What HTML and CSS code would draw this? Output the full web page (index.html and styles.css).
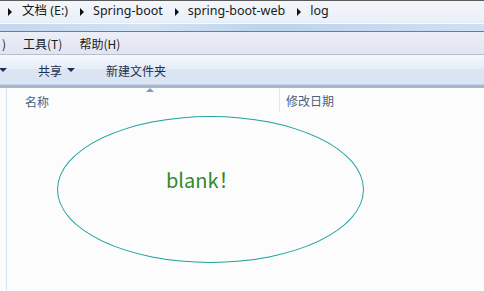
FILE: index.html
```html
<!DOCTYPE html>
<html>
<head>
<meta charset="utf-8">
<link rel="stylesheet" href="styles.css">
</head>
<body>
<div class="window">
  <div class="address">
    <span class="crumb-arrow first"></span><span class="crumb">文档 (E:)</span>
    <span class="crumb-arrow"></span><span class="crumb">Spring-boot</span>
    <span class="crumb-arrow"></span><span class="crumb">spring-boot-web</span>
    <span class="crumb-arrow"></span><span class="crumb">log</span>
  </div>
  <div class="band"></div>
  <div class="menubar">
    <span class="menu cut">)</span>
    <span class="menu">工具(T)</span>
    <span class="menu">帮助(H)</span>
  </div>
  <div class="toolbar">
    <span class="tool cutoff"><span class="caret"></span></span>
    <span class="tool">共享<span class="caret"></span></span>
    <span class="tool">新建文件夹</span>
  </div>
  <div class="content">
    <div class="headers">
      <div class="col col-name">名称<span class="sort"></span></div>
      <div class="col col-date">修改日期</div>
    </div>
    <div class="canvas">
      <div class="ellipse"><span class="blank">blank！</span></div>
    </div>
  </div>
</div>
</body>
</html>
```

FILE: styles.css
```css
* { box-sizing: border-box; }
html, body { margin: 0; padding: 0; }
body {
  width: 484px;
  height: 291px;
  overflow: hidden;
  font-family: "Noto Sans CJK SC", "Microsoft YaHei", sans-serif;
  background: #fcfcfc;
}
.window {
  display: flex;
  flex-direction: column;
  height: 291px;
}
.address {
  height: 22px;
  border-top: 1px solid #5a5a5a;
  background: linear-gradient(#f3f6fb, #eaf0f8);
  display: flex;
  align-items: center;
  font-family: "Noto Sans", "Noto Sans CJK SC", sans-serif;
  font-size: 12.5px;
  color: #1a1a1a;
  line-height: 1;
  white-space: nowrap;
}
.crumb-arrow {
  width: 0;
  height: 0;
  border-top: 4px solid transparent;
  border-bottom: 4px solid transparent;
  border-left: 4px solid #111;
  margin-left: 12px;
  margin-right: 9px;
}
.crumb-arrow.first { margin-left: 8px; margin-right: 10px; }
.band {
  height: 10px;
  border-top: 1px solid #e6ecf3;
  border-bottom: 1px solid #6d7c8e;
  background: linear-gradient(90deg, #c3d7ee 0%, #d3e3f4 30%, #bcd3ee 55%, #cfe0f3 100%);
  box-shadow: inset 0 1px 0 #f8fbff;
}
.menubar {
  height: 23px;
  background: linear-gradient(#eceef7, #e1e5f2);
  border-bottom: 1px solid #b9bfd0;
  display: flex;
  align-items: center;
  font-size: 12px;
  color: #1a1a1a;
}
.menu { margin-right: 17px; white-space: nowrap; }
.menu.cut { margin-left: 2px; margin-right: 17px; }
.toolbar {
  height: 33px;
  background: linear-gradient(#f4f8fd 0%, #e5edf8 45%, #dbe5f3 47%, #dae4f2 100%);
  border-bottom: 3px solid #a6b6cc;
  box-shadow: inset 0 -1px 0 #c6d3e4;
  display: flex;
  align-items: center;
  font-size: 12px;
  color: #1e3050;
}
.tool { display: flex; align-items: center; white-space: nowrap; margin-right: 31px; }
.tool.cutoff { margin-left: -6px; margin-right: 31px; }
.caret {
  width: 0;
  height: 0;
  border-left: 4px solid transparent;
  border-right: 4px solid transparent;
  border-top: 4px solid #1e3050;
  margin-left: 5px;
}
.content {
  flex: 1;
  margin-left: 6px;
  border-left: 1px solid #d6e5f5;
  background: #fcfcfc;
}
.headers {
  display: flex;
  height: 26px;
  font-size: 12px;
  color: #4e6080;
}
.col { display: flex; align-items: center; position: relative; }
.col-name { width: 272px; padding-left: 18px; }
.col-date { border-left: 1px solid #e2e8f0; padding-left: 6px; height: 24px; }
.sort {
  position: absolute;
  left: 139px;
  top: 0;
  width: 0;
  height: 0;
  border-left: 4px solid transparent;
  border-right: 4px solid transparent;
  border-bottom: 4px solid #7a9cc0;
}
.canvas { padding: 2px 0 0 50px; }
.ellipse {
  width: 307px;
  height: 147px;
  border: 1px solid #1fa3a0;
  border-radius: 50%;
  padding: 48px 0 0 108px;
}
.blank {
  font-size: 20px;
  color: #2e8a2a;
  line-height: 30px;
}
```
